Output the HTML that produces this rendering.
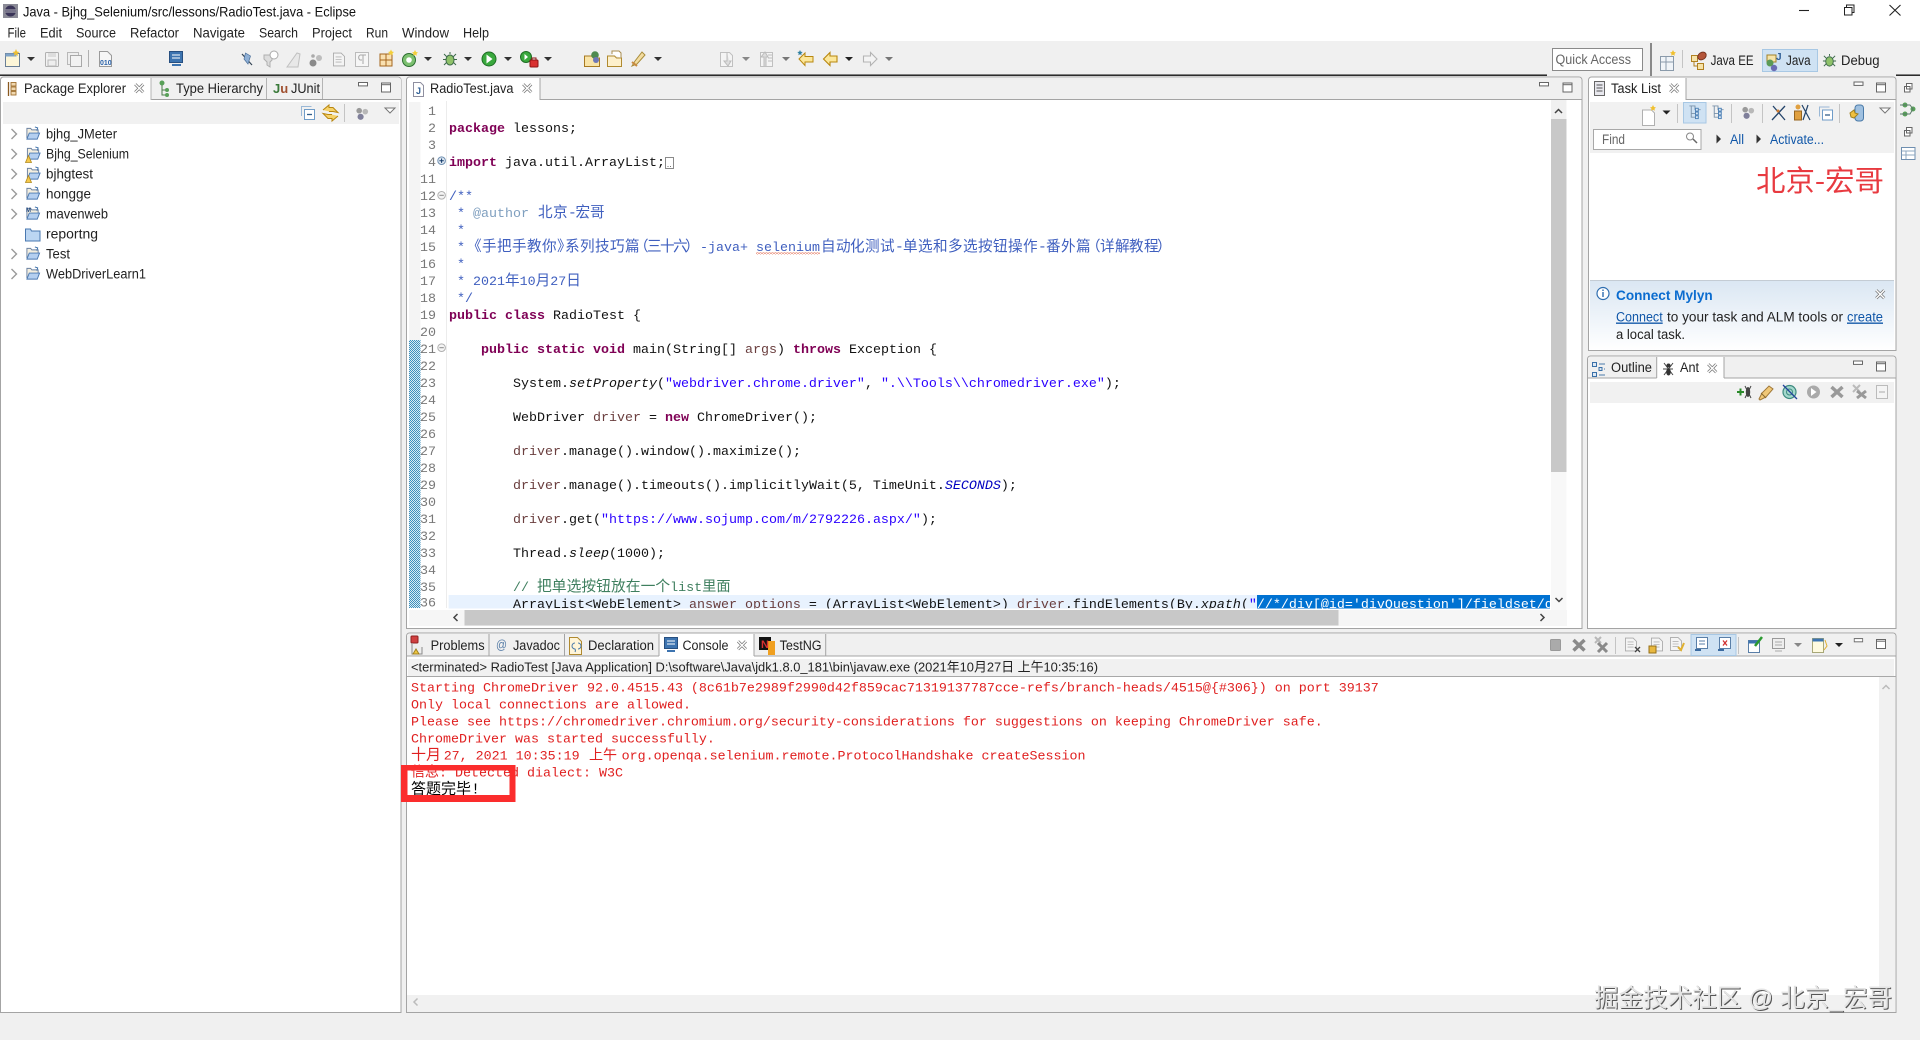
<!DOCTYPE html>
<html lang="zh"><head><meta charset="utf-8"><title>Java - Bjhg_Selenium/src/lessons/RadioTest.java - Eclipse</title>
<style>
html,body{margin:0;padding:0;width:1920px;height:1040px;overflow:hidden;background:#f0f0f0}
svg{display:block;filter:blur(.3px)}
.u{font-family:"Liberation Sans","Noto Sans CJK SC",sans-serif;font-size:13.5px;fill:#222}
.m{font-family:"Liberation Mono","Noto Sans CJK SC",monospace;font-size:13.33px;fill:#111;white-space:pre}
.n{font-family:"Liberation Mono",monospace;font-size:13.33px;fill:#787878;text-anchor:end}
.k{fill:#7f0055;font-weight:bold}.c{fill:#3f7f5f}.d{fill:#3f5fbf}.t{fill:#7f9fbf}.s{fill:#2a00ff}.l{fill:#6a3e3e}.i{font-style:italic}.f{fill:#0000c0;font-style:italic}
.z{font-size:14.6px}
.r{fill:#e02020}
.b{fill:#0f56a8}
</style></head><body>
<svg xmlns="http://www.w3.org/2000/svg" width="1920" height="1040" viewBox="0 0 1920 1040">
<defs>
<clipPath id="edclip"><rect x="447" y="100" width="1103" height="508.5"/></clipPath>
<pattern id="dith" width="2" height="2" patternUnits="userSpaceOnUse"><rect width="2" height="2" fill="#d8ecf4"/><rect width="1" height="1" fill="#3f8fbd"/><rect x="1" y="1" width="1" height="1" fill="#3f8fbd"/></pattern>
<pattern id="squig" width="3" height="2" patternUnits="userSpaceOnUse"><path d="M0 1.6L1.5 .4 3 1.6" fill="none" stroke="#e06a50" stroke-width=".7"/></pattern>
<symbol id="cx" viewBox="0 0 10 10"><path d="M1.2 1.2l7.600 7.600M8.800 1.200l-7.600 7.600" stroke="#777" stroke-width="2.800"/><path d="M1.200 1.200l7.600 7.600M8.800 1.200l-7.600 7.600" stroke="#fff" stroke-width="1.300"/></symbol>
<symbol id="mn" viewBox="0 0 10 5"><rect x=".5" y=".5" width="9" height="3.4" fill="#fff" stroke="#666"/></symbol>
<symbol id="mx" viewBox="0 0 10 10"><rect x=".5" y=".5" width="9" height="9" fill="#fff" stroke="#666"/><path d="M.5 2.2h9" stroke="#666"/></symbol>
<symbol id="fo" viewBox="0 0 16 16"><path d="M1.5 13V2.5h4l1.2 1.6h6.8V8" fill="#f4efe0" stroke="#6a80a0"/><path d="M1.5 14l2.5-6.5h11L12.5 14z" fill="#b4cff0" stroke="#4a78b0"/><path d="M10 1l3 1-1 3" fill="none" stroke="#3a6ea8"/></symbol>
<symbol id="wa" viewBox="0 0 7 8"><path d="M3.5 .5L6.5 7.5H.5z" fill="#f6c94c" stroke="#b08a20" stroke-width=".8"/></symbol>
<symbol id="bug" viewBox="0 0 16 16"><g stroke="#3d6a4a" stroke-width="1"><path d="M8 1v2M2 3l3 3M14 3l-3 3M1 8.500h3M12 8.500h3M2 14l3-3M14 14l-3-3"/></g><ellipse cx="8" cy="9" rx="4" ry="5" fill="#8fc26a" stroke="#3d6a4a"/></symbol>
<symbol id="pg" viewBox="0 0 14 16"><path d="M.5 .5h9l4 4v11H.5z" fill="#f4f4f4" stroke="#a8a8a8"/><path d="M3 5h7M3 8h7M3 11h7" stroke="#b4b4b4"/></symbol>
<symbol id="tt" viewBox="0 0 14 16"><path d="M1 1h6v4h6M3 1v12h5M3 9h5" fill="none" stroke="#7a92aa"/><rect x="7.500" y="3.500" width="3" height="3" fill="#dce8f4" stroke="#4a7fb5"/><rect x="7.500" y="7.500" width="3" height="3" fill="#dce8f4" stroke="#4a7fb5"/><rect x="7.500" y="11.500" width="3" height="3" fill="#dce8f4" stroke="#4a7fb5"/></symbol>
<symbol id="fil" viewBox="0 0 14 16"><circle cx="4" cy="5" r="3" fill="#9a9a9a"/><circle cx="10.500" cy="6" r="3" fill="#b8b8b8"/><circle cx="5.500" cy="11.500" r="3.300" fill="#7f7f9a"/></symbol>
<symbol id="col" viewBox="0 0 14 14"><rect x="3.500" y="3.500" width="10" height="10" fill="#fff" stroke="#6f9cc8"/><path d="M.5 10V.5h10" fill="none" stroke="#9ab8d6"/><path d="M6 8.500h5" stroke="#345f8a" stroke-width="1.300"/></symbol>
</defs>

<rect width="1920" height="1040" fill="#f0f0f0"/>
<rect width="1920" height="41" fill="#fff"/>

<!-- title -->
<rect x="3" y="4" width="15" height="14" fill="#8a8a96"/><circle cx="10.500" cy="11" r="5.500" fill="#3a3458"/><path d="M5 10h11M5 12h11" stroke="#ddd" stroke-width=".8"/>
<text class="u" x="23" y="16.500" textLength="333" lengthAdjust="spacingAndGlyphs" style="font-size:13.800px;fill:#111">Java - Bjhg_Selenium/src/lessons/RadioTest.java - Eclipse</text>
<path d="M1799 10.500h10" stroke="#222" stroke-width="1.100"/>
<path d="M1844.500 7.500h7.500v7.500h-7.500zM1846.500 7.500v-2.500h7.500v7.500h-2" fill="none" stroke="#222" stroke-width="1"/>
<path d="M1889.500 5l11 10.500M1900.500 5l-11 10.500" stroke="#222" stroke-width="1.100"/>

<!-- menu -->
<g style="font-size:13.500px">
<text class="u" x="7.500" y="37.500" textLength="18.500" lengthAdjust="spacingAndGlyphs">File</text>
<text class="u" x="40" y="37.500" textLength="22" lengthAdjust="spacingAndGlyphs">Edit</text>
<text class="u" x="76" y="37.500" textLength="40" lengthAdjust="spacingAndGlyphs">Source</text>
<text class="u" x="130" y="37.500" textLength="49" lengthAdjust="spacingAndGlyphs">Refactor</text>
<text class="u" x="193" y="37.500" textLength="52" lengthAdjust="spacingAndGlyphs">Navigate</text>
<text class="u" x="259" y="37.500" textLength="39" lengthAdjust="spacingAndGlyphs">Search</text>
<text class="u" x="312" y="37.500" textLength="40" lengthAdjust="spacingAndGlyphs">Project</text>
<text class="u" x="366" y="37.500" textLength="22" lengthAdjust="spacingAndGlyphs">Run</text>
<text class="u" x="402" y="37.500" textLength="47" lengthAdjust="spacingAndGlyphs">Window</text>
<text class="u" x="463" y="37.500" textLength="26" lengthAdjust="spacingAndGlyphs">Help</text>
</g>

<!-- main toolbar -->
<rect x="5.500" y="53.500" width="14" height="13" fill="#fdf6d8" stroke="#6a7f96"/><rect x="5.500" y="53.500" width="11" height="3" fill="#7fa3c8"/><path d="M16 49l1 2.500 2.500 .5-2 1.500.5 2.500-2-1.500-2 1.500.5-2.500-2-1.500 2.500-.5z" fill="#f0c030"/>
<path d="M27 57h8l-4 4z" fill="#333"/>
<rect x="45.500" y="52.500" width="13" height="14" rx="1" fill="#f2f2f2" stroke="#b0b0b0"/><rect x="48" y="60" width="8" height="6" fill="#eee" stroke="#b8b8b8"/><rect x="48" y="53" width="8" height="4" fill="#ddd"/>
<rect x="67.500" y="52.500" width="11" height="12" fill="#eee" stroke="#b8b8b8"/><rect x="70.500" y="55.500" width="11" height="11" fill="#f2f2f2" stroke="#a8a8a8"/>
<path d="M88.500 50v17" stroke="#b0b0b0"/>
<path d="M99.500 51.500h8l4 4v11h-12z" fill="#f6f6f6" stroke="#9a9a9a"/>
<text x="100" y="65" style="font:bold 7px 'Liberation Sans',sans-serif;fill:#2a62a8">010</text>
<rect x="169.500" y="51.500" width="13" height="11" fill="#3d74b0" stroke="#274f80"/><path d="M172 55h8M172 58h8" stroke="#fff"/><path d="M172 65h9" stroke="#3d74b0" stroke-width="2"/>
<path d="M242 54l10 11" stroke="#345" stroke-width="1.200"/><path d="M245.500 53l5 3-2.500 8-4-5z" fill="#8fb0d6" stroke="#4a6f9a" stroke-width=".7"/>
<path d="M264 55h8v5l-2 2v5l-3-2v-3l-3-3z" fill="#ddd" stroke="#b0b0b0"/><circle cx="274" cy="55" r="4" fill="#fff" stroke="#aaa"/>
<path d="M287 67l10-14 3 1-2 13z" fill="#e8e8e8" stroke="#c0c0c0"/>
<circle cx="313" cy="63" r="3.500" fill="#8a8a8a"/><circle cx="319" cy="58" r="3" fill="#bdbdbd"/><circle cx="313" cy="56" r="1.800" fill="#aaa"/>
<use href="#pg" x="333" y="52" width="12" height="15"/>
<rect x="355.500" y="52.500" width="13" height="14" fill="#f6f6f6" stroke="#bbb"/><path d="M360 55h6M363 55v9M360 55a3 3 0 0 0 0 5h2" fill="none" stroke="#a8a8a8"/>
<rect x="380" y="54" width="12" height="12" fill="#f9e0b0" stroke="#a5661e"/><path d="M380 60h12M386 54v12" stroke="#a5661e"/><path d="M391 49.500l1 2 2 .5-1.500 1.300.3 2-1.800-1-1.800 1 .3-2-1.500-1.300 2-.5z" fill="#f3cf3a"/>
<circle cx="409" cy="60" r="6.500" fill="#7cc070" stroke="#2c6e30"/><circle cx="409" cy="60" r="2.800" fill="#fff"/><path d="M415 50l1 2 2 .5-1.500 1.300.3 2-1.800-1-1.800 1 .3-2-1.500-1.300 2-.5z" fill="#f3cf3a"/>
<path d="M424 57h8l-4 4z" fill="#333"/>
<use href="#bug" x="442" y="51" width="16" height="16"/>
<path d="M464 57h8l-4 4z" fill="#333"/>
<circle cx="489" cy="59" r="7" fill="#3aa93e" stroke="#1f6e25"/><path d="M486.500 54.500l6 4.500-6 4.500z" fill="#fff"/>
<path d="M504 57h8l-4 4z" fill="#333"/>
<circle cx="526" cy="57" r="5.500" fill="#3aa93e" stroke="#1f6e25"/><path d="M524.500 54l3.500 3-3.500 3z" fill="#fff"/><rect x="530" y="60" width="8" height="7" rx="1" fill="#d93030" stroke="#8e1515"/><path d="M532 60v-2h4v2" fill="none" stroke="#8e1515"/>
<path d="M544 57h8l-4 4z" fill="#333"/>
<path d="M584.500 56h7l2 2h6v8.500h-15z" fill="#f9e4a8" stroke="#a87a22"/><circle cx="595" cy="55" r="3.800" fill="#4f8a4f"/><circle cx="596" cy="60" r="3" fill="#6d77b8"/>
<path d="M607.500 56h7l2 2h5v8.500h-14z" fill="#fdf0cc" stroke="#b08a30"/><path d="M612 54v-3h7l2 2v5" fill="#fff" stroke="#a88c50"/>
<path d="M632 66l3-5 7-9 3 3-8 9z" fill="#f3dca0" stroke="#a88c3a"/><path d="M632 62l5 4" stroke="#c88a40" stroke-width="2"/>
<path d="M654 57h8l-4 4z" fill="#333"/>
<path d="M720.500 52.500h9l3 3v11h-12z" fill="#f4f4f4" stroke="#c0c0c0"/><path d="M727 52v9h-3l4 5 3-5h-2" fill="#ddd" stroke="#bbb"/>
<path d="M742 57h8l-4 4z" fill="#888"/>
<path d="M760.500 52.500h12v14h-12z" fill="#f4f4f4" stroke="#c0c0c0"/><path d="M764 66v-9h-3l4-5 3 5h-2v9" fill="#ddd" stroke="#bbb"/><path d="M768 55h4M768 58h4M768 61h4" stroke="#bbb"/>
<path d="M782 57h8l-4 4z" fill="#777"/>
<path d="M799 59l6-6v3.500h8v5.500h-8v3.500z" fill="#fce79a" stroke="#b8870f"/><path d="M800 50l.8 1.700 1.900.3-1.400 1.300.3 1.900-1.600-.9-1.600.9.3-1.900-1.400-1.300 1.900-.3z" fill="#2e7fa0"/>
<path d="M823.500 59l6.500-6.500v3.500h7v6h-7v3.500z" fill="#fce79a" stroke="#b8870f" stroke-width="1.100"/>
<path d="M845 57h8l-4 4z" fill="#222"/>
<path d="M877 59l-6.500-6.500v3.500h-7v6h7v3.500z" fill="#f4f4f4" stroke="#b4b4b4" stroke-width="1.100"/>
<path d="M885 57h8l-4 4z" fill="#777"/>

<!-- quick access / perspectives -->
<rect x="1552.500" y="48.500" width="90" height="22" fill="#fff" stroke="#8a8a8a"/>
<text class="u" x="1555.500" y="64" textLength="75.500" lengthAdjust="spacingAndGlyphs" style="fill:#666">Quick Access</text>
<path d="M1651 43v33" stroke="#222"/>
<rect x="1660.500" y="56.500" width="13" height="14" fill="#f0f4f8" stroke="#8a9aaa"/><path d="M1660.500 62h13M1666 56.500v14" stroke="#8a9aaa"/><path d="M1673 50l1 2 2 .5-1.500 1.300.3 2-1.800-1-1.800 1 .3-2-1.500-1.300 2-.5z" fill="#f0c030"/>
<path d="M1682.500 50v18" stroke="#c4c4c4"/>
<rect x="1691.500" y="55.500" width="6" height="6" fill="#f6e3a8" stroke="#b08020"/><rect x="1697.500" y="63.500" width="6" height="6" fill="#f6e3a8" stroke="#b08020"/><path d="M1694 61v5h3.500" fill="none" stroke="#b08020"/><ellipse cx="1702" cy="56" rx="4.500" ry="3.500" fill="#b4553a" stroke="#7a3520" transform="rotate(-35 1702 56)"/>
<text class="u" x="1710.600" y="65" textLength="43" lengthAdjust="spacingAndGlyphs">Java EE</text>
<rect x="1762.500" y="49.500" width="55" height="22" fill="#cfe2f3" stroke="#a8c8e4"/>
<rect x="1767" y="55" width="9" height="7" fill="#f6e3a8" stroke="#a08028"/><circle cx="1770" cy="63" r="3.500" fill="#5a9a56"/><circle cx="1774" cy="68" r="3.200" fill="#6a6db4"/>
<text x="1776" y="60" style="font:bold 10px 'Liberation Sans',sans-serif;fill:#2f5f96">J</text>
<text class="u" x="1786" y="65" textLength="24.600" lengthAdjust="spacingAndGlyphs">Java</text>
<use href="#bug" x="1822" y="52" width="15" height="17"/>
<text class="u" x="1841" y="65" textLength="38.600" lengthAdjust="spacingAndGlyphs">Debug</text>

<!-- black line -->
<path d="M0 75.200H1547M1896 75.200H1920" stroke="#111" stroke-width="1.400"/>

<!-- LEFT panel -->
<path d="M.5 1012.500V80a3 3 0 0 1 3-3H398a3 3 0 0 1 3 3v932.500z" fill="#fff" stroke="#a4a4a4"/>
<path d="M151 78H399a2 2 0 0 1 2 2v19.500H151z" fill="#f0f0f0"/>
<path d="M151 99.500H401" stroke="#a0a0a0"/>
<path d="M151 78v22M266.500 78v21M322.500 78v21" stroke="#b4b4b4"/>
<rect x="3" y="102" width="396" height="22" fill="#f1f1f1"/>
<path d="M8.500 82v14" stroke="#8a5a20" stroke-width="1.300"/>
<rect x="11" y="82.500" width="5" height="3.500" fill="#f0d8b0" stroke="#a07030" stroke-width=".9"/><rect x="11" y="87" width="5" height="3.500" fill="#f0d8b0" stroke="#a07030" stroke-width=".9"/><rect x="11" y="91.500" width="5" height="3.500" fill="#f0d8b0" stroke="#a07030" stroke-width=".9"/>
<text class="u" x="24" y="93" textLength="102" lengthAdjust="spacingAndGlyphs">Package Explorer</text>
<use href="#cx" x="134" y="83" width="10.500" height="10.500"/>
<circle cx="162" cy="83" r="2.500" fill="#58a058"/><path d="M162 85v10h5M162 90h5" fill="none" stroke="#4a7a4a"/><circle cx="167" cy="90" r="2" fill="#58a058"/><circle cx="167" cy="95" r="2" fill="#58a058"/>
<text class="u" x="176" y="93" textLength="87" lengthAdjust="spacingAndGlyphs">Type Hierarchy</text>
<text x="273" y="93" style="font:bold 13px 'Liberation Sans',sans-serif"><tspan fill="#3a7a3a">J</tspan><tspan fill="#a05030">u</tspan></text>
<text class="u" x="291" y="93" textLength="29" lengthAdjust="spacingAndGlyphs">JUnit</text>
<use href="#mn" x="358" y="82" width="10" height="5"/>
<use href="#mx" x="381" y="82.500" width="10" height="10"/>
<use href="#col" x="301" y="106" width="14" height="14"/>
<path d="M323 110l6-5v2.500h4l5 5-5-1h-4M338 116l-6 5v-2.500h-4l-5-5 5 1h4" fill="#f6d26a" stroke="#b8860f" stroke-width="1"/>
<path d="M344.500 104v18" stroke="#c4c4c4"/>
<use href="#fil" x="355" y="106" width="14" height="15"/>
<path d="M385 108h10l-5 5z" fill="#fff" stroke="#777"/>

<!-- tree -->
<g fill="none" stroke="#9a9a9a" stroke-width="1.400">
<path d="M11.500 129l5 5-5 5M11.500 149l5 5-5 5M11.500 169l5 5-5 5M11.500 189l5 5-5 5M11.500 209l5 5-5 5M11.500 249l5 5-5 5M11.500 269l5 5-5 5"/>
</g>
<use href="#fo" x="25" y="126" width="16" height="15"/>
<use href="#fo" x="26" y="146" width="15" height="15"/><use href="#wa" x="25" y="155" width="7" height="8"/>
<use href="#fo" x="26" y="166" width="15" height="15"/><use href="#wa" x="25" y="175" width="7" height="8"/>
<use href="#fo" x="25" y="186" width="16" height="15"/>
<use href="#fo" x="25" y="206" width="16" height="15"/><text x="26" y="212" style="font:bold 6px 'Liberation Sans',sans-serif;fill:#244a80">M</text>
<path d="M25.500 241v-12h5l1 2h8.500v10z" fill="#bcd6f2" stroke="#4a78b0"/>
<use href="#fo" x="25" y="246" width="16" height="15"/>
<use href="#fo" x="25" y="266" width="16" height="15"/>
<text class="u" x="46" y="138.500" textLength="71" lengthAdjust="spacingAndGlyphs">bjhg_JMeter</text>
<text class="u" x="46" y="158.500" textLength="83" lengthAdjust="spacingAndGlyphs">Bjhg_Selenium</text>
<text class="u" x="46" y="178.500" textLength="47" lengthAdjust="spacingAndGlyphs">bjhgtest</text>
<text class="u" x="46" y="198.500" textLength="45" lengthAdjust="spacingAndGlyphs">hongge</text>
<text class="u" x="46" y="218.500" textLength="62" lengthAdjust="spacingAndGlyphs">mavenweb</text>
<text class="u" x="46" y="238.500" textLength="52" lengthAdjust="spacingAndGlyphs">reportng</text>
<text class="u" x="46" y="258.500" textLength="24" lengthAdjust="spacingAndGlyphs">Test</text>
<text class="u" x="46" y="278.500" textLength="100" lengthAdjust="spacingAndGlyphs">WebDriverLearn1</text>

<!-- EDITOR panel -->
<path d="M406.500 628.500V80a3 3 0 0 1 3-3H1579a3 3 0 0 1 3 3v548.500z" fill="#fff" stroke="#a4a4a4"/>
<path d="M540 78H1579a2 2 0 0 1 2 2v19.500H540z" fill="#f0f0f0"/>
<path d="M540 78v22M540 99.500H1582" stroke="#a4a4a4"/>
<path d="M413.500 82.500h7l3 3v11h-10z" fill="#fff" stroke="#8f8fa0"/><text x="416" y="94" style="font:bold 9px 'Liberation Sans',sans-serif;fill:#2f5f96">J</text>
<text class="u" x="430" y="93" textLength="83.500" lengthAdjust="spacingAndGlyphs">RadioTest.java</text>
<use href="#cx" x="522" y="83" width="10.500" height="10.500"/>
<use href="#mn" x="1539" y="82" width="10" height="5"/>
<use href="#mx" x="1562.500" y="82.500" width="10" height="10"/>

<rect x="409" y="102" width="11.500" height="506" fill="#f4f4f4"/>
<rect x="409" y="340" width="11.500" height="268" fill="url(#dith)"/>
<path d="M446.500 101v507" stroke="#ececec"/>

<g>
<text class="n" x="436" y="115">1</text><text class="n" x="436" y="132">2</text><text class="n" x="436" y="149">3</text><text class="n" x="436" y="166">4</text><text class="n" x="436" y="183">11</text><text class="n" x="436" y="200">12</text><text class="n" x="436" y="217">13</text><text class="n" x="436" y="234">14</text><text class="n" x="436" y="251">15</text><text class="n" x="436" y="268">16</text><text class="n" x="436" y="285">17</text><text class="n" x="436" y="302">18</text><text class="n" x="436" y="319">19</text><text class="n" x="436" y="336">20</text><text class="n" x="436" y="353">21</text><text class="n" x="436" y="370">22</text><text class="n" x="436" y="387">23</text><text class="n" x="436" y="404">24</text><text class="n" x="436" y="421">25</text><text class="n" x="436" y="438">26</text><text class="n" x="436" y="455">27</text><text class="n" x="436" y="472">28</text><text class="n" x="436" y="489">29</text><text class="n" x="436" y="506">30</text><text class="n" x="436" y="523">31</text><text class="n" x="436" y="540">32</text><text class="n" x="436" y="557">33</text><text class="n" x="436" y="574">34</text><text class="n" x="436" y="591">35</text><text class="n" x="436" y="606.500">36</text>
</g>
<circle cx="441.600" cy="160.700" r="3.800" fill="#dfe8f2" stroke="#6f8fb0"/><path d="M439.400 160.700h4.400M441.600 158.500v4.400" stroke="#123a6a"/>
<circle cx="441.600" cy="195.300" r="3.800" fill="#f4f4f4" stroke="#b0b0b0"/><path d="M439.400 195.300h4.400" stroke="#888"/>
<circle cx="441.600" cy="347.700" r="3.800" fill="#f4f4f4" stroke="#b0b0b0"/><path d="M439.400 347.700h4.400" stroke="#888"/>

<rect x="448.600" y="595" width="1101.400" height="13.500" fill="#e8f2fe"/>
<rect x="1257" y="595" width="293" height="13.500" fill="#0072d2"/>

<g clip-path="url(#edclip)">
<text class="m" x="449" y="132"><tspan class="k">package</tspan> lessons;</text>
<text class="m" x="449" y="166"><tspan class="k">import</tspan> java.util.ArrayList;</text>
<text class="m d" x="449" y="200">/**</text>
<text class="m d" x="449" y="217"> * <tspan class="t">@author</tspan></text>
<text class="m d z" y="217" x="538 553 568 575.500 590">北京-宏哥</text>
<text class="m d" x="449" y="234"> *</text>
<text class="m d" x="449" y="251"> *</text>
<text class="m d z" y="251" x="467 482 497 512 527 542 557 565 580 595 610 625 634 647 660 673 685">《手把手教你》系列技巧篇（三十六）</text>
<text class="m d" x="700" y="251">-java+ selenium</text>
<text class="m d z" y="251" x="821 836 850 865 880 895 903 918 933 948 963 978 993 1008 1023 1038 1046 1061 1076 1086 1100 1115 1129 1144 1157">自动化测试-单选和多选按钮操作-番外篇（详解教程）</text>
<text class="m d" x="449" y="268"> *</text>
<text class="m d" x="449" y="285"> * 2021<tspan class="z">年</tspan>10<tspan class="z">月</tspan>27<tspan class="z">日</tspan></text>
<text class="m d" x="449" y="302"> */</text>
<text class="m" x="449" y="319"><tspan class="k">public</tspan> <tspan class="k">class</tspan> RadioTest {</text>
<text class="m" x="449" y="353">    <tspan class="k">public</tspan> <tspan class="k">static</tspan> <tspan class="k">void</tspan> main(String[] <tspan class="l">args</tspan>) <tspan class="k">throws</tspan> Exception {</text>
<text class="m" x="449" y="387">        System.<tspan class="i">setProperty</tspan>(<tspan class="s">"webdriver.chrome.driver"</tspan>, <tspan class="s">".\\Tools\\chromedriver.exe"</tspan>);</text>
<text class="m" x="449" y="421">        WebDriver <tspan class="l">driver</tspan> = <tspan class="k">new</tspan> ChromeDriver();</text>
<text class="m" x="449" y="455">        <tspan class="l">driver</tspan>.manage().window().maximize();</text>
<text class="m" x="449" y="489">        <tspan class="l">driver</tspan>.manage().timeouts().implicitlyWait(5, TimeUnit.<tspan class="f">SECONDS</tspan>);</text>
<text class="m" x="449" y="523">        <tspan class="l">driver</tspan>.get(<tspan class="s">"https://www.sojump.com/m/2792226.aspx/"</tspan>);</text>
<text class="m" x="449" y="557">        Thread.<tspan class="i">sleep</tspan>(1000);</text>
<text class="m c" x="449" y="591">        // <tspan style="font-size:14.800px">把单选按钮放在一个</tspan>list<tspan style="font-size:14.200px">里面</tspan></text>
<text class="m" x="449" y="608">        ArrayList&lt;WebElement&gt; <tspan class="l">answer_options</tspan> = (ArrayList&lt;WebElement&gt;) <tspan class="l">driver</tspan>.findElements(By.<tspan class="i">xpath</tspan>(<tspan class="s">"</tspan><tspan style="fill:#fff">//*/div[@id='divQuestion']/fieldset/d</tspan></text>
</g>
<rect x="665.500" y="157.500" width="8" height="11" fill="#fff" stroke="#8a8a8a"/><path d="M667.500 166.500h1M670 166.500h1" stroke="#777"/>
<rect x="756" y="252.500" width="64" height="2" fill="url(#squig)"/>

<!-- editor scrollbars -->
<rect x="1551" y="100" width="15.500" height="510" fill="#f8f8f8"/>
<rect x="1551" y="100" width="15.500" height="19" fill="#f0f0f0"/>
<path d="M1555 113l3.500-3.500 3.500 3.500" fill="none" stroke="#444" stroke-width="1.500"/>
<rect x="1551" y="119" width="15.500" height="353" fill="#c8c8c8"/>
<path d="M1555.500 598l3.500 3.500 3.500-3.500" fill="none" stroke="#444" stroke-width="1.500"/>
<rect x="409" y="610" width="1158" height="16" fill="#f6f6f6"/>
<rect x="409" y="608.500" width="1142" height="1.500" fill="#fff"/>
<rect x="464.500" y="610" width="874" height="15.500" fill="#c8c8c8"/>
<path d="M457.500 614l-3.500 3.500 3.500 3.500" fill="none" stroke="#444" stroke-width="1.500"/>
<path d="M1540.500 614l3.500 3.500-3.500 3.500" fill="none" stroke="#444" stroke-width="1.500"/>

<!-- TASK LIST panel -->
<path d="M1588.500 350.500V80a3 3 0 0 1 3-3H1893a3 3 0 0 1 3 3v270.500z" fill="#fff" stroke="#a4a4a4"/>
<path d="M1686 78H1893a2 2 0 0 1 2 2v19.500H1686z" fill="#f0f0f0"/>
<path d="M1686 78v22M1686 99.500H1896" stroke="#a4a4a4"/>
<rect x="1594.500" y="81.500" width="10" height="14" fill="#e8e8ee" stroke="#666"/><path d="M1596.500 85h6M1596.500 88h6M1596.500 91h6" stroke="#555"/>
<text class="u" x="1611" y="93" textLength="50" lengthAdjust="spacingAndGlyphs">Task List</text>
<use href="#cx" x="1669" y="83" width="10.500" height="10.500"/>
<use href="#mn" x="1853.500" y="81.500" width="10" height="5"/>
<use href="#mx" x="1876" y="82.500" width="10" height="10"/>
<rect x="1590" y="102" width="304" height="51" fill="#f1f1f1"/>
<path d="M1642.500 110h9l3 3v12.500h-12z" fill="#fff" stroke="#b0b0b0"/><path d="M1653 105l1 2 2 .5-1.500 1.300.3 2-1.800-1-1.800 1 .3-2-1.500-1.300 2-.5z" fill="#f0c030"/>
<path d="M1662.500 110.500h8l-4 4z" fill="#222"/>
<path d="M1677.500 104v19M1731.500 104v19M1762.500 104v19M1839.500 104v19" stroke="#c4c4c4"/>
<rect x="1683.500" y="102.500" width="22.500" height="20.500" fill="#cfe2f3" stroke="#a8c8e4"/>
<use href="#tt" x="1688" y="105" width="14" height="15"/>
<use href="#tt" x="1711" y="105" width="14" height="15"/>
<use href="#fil" x="1741" y="105" width="14" height="15"/>
<path d="M1773 106l12 14M1785 106l-13 14" stroke="#24446a" stroke-width="1.300"/><circle cx="1778" cy="111" r="1.500" fill="#cc7a30"/>
<circle cx="1798" cy="107" r="2.500" fill="#e0a040"/><path d="M1794.500 120v-9h7v9z" fill="#e0a040" stroke="#966520"/><path d="M1802 105l8 15M1808 105l-5 15" stroke="#24446a" stroke-width="1.200"/>
<use href="#col" x="1819" y="106" width="14" height="15"/>
<rect x="1855" y="105" width="8.500" height="16" rx="3" fill="#9fc0e0" stroke="#4a7aa8"/><path d="M1850 113l4-3 1 3 3 1-4 4-3-1z" fill="#f0c040" stroke="#a08020"/>
<path d="M1880 108h10l-5 5z" fill="#fff" stroke="#777"/>
<rect x="1593.500" y="129.500" width="107.500" height="20" fill="#fff" stroke="#a8a8a8"/>
<text class="u" x="1602" y="144" textLength="23" lengthAdjust="spacingAndGlyphs" style="fill:#666">Find</text>
<circle cx="1690" cy="136.500" r="3.500" fill="#fff" stroke="#888"/><path d="M1693 139l4 4" stroke="#666" stroke-width="1.500"/>
<path d="M1716.500 134.500l4.500 4.500-4.500 4.500zM1756.500 134.500l4.500 4.500-4.500 4.500z" fill="#333"/>
<text class="u b" x="1730" y="144" textLength="14" lengthAdjust="spacingAndGlyphs">All</text>
<text class="u b" x="1770" y="144" textLength="54" lengthAdjust="spacingAndGlyphs">Activate...</text>
<text x="1756" y="191" textLength="128" lengthAdjust="spacingAndGlyphs" style="font-family:'Noto Sans CJK SC',sans-serif;font-size:29px;fill:#e83a40">北京-宏哥</text>

<linearGradient id="myl" x1="0" y1="0" x2="0" y2="1"><stop offset="0" stop-color="#dbe7f3"/><stop offset="1" stop-color="#fff"/></linearGradient>
<rect x="1590" y="281" width="304" height="69" fill="url(#myl)"/>
<path d="M1590 280.500h304" stroke="#c4ccd4"/>
<circle cx="1603" cy="293.500" r="6" fill="#fff" stroke="#2d6db0" stroke-width="1.200"/><path d="M1603 292v5M1603 289.500v1.500" stroke="#2d6db0" stroke-width="1.400"/>
<text x="1616" y="300" textLength="96.700" lengthAdjust="spacingAndGlyphs" style="font:bold 13.500px 'Liberation Sans',sans-serif;fill:#0b6ccf">Connect Mylyn</text>
<use href="#cx" x="1875" y="289" width="10.500" height="10.500"/>
<text class="u b" x="1616" y="321.500" textLength="46.700" lengthAdjust="spacingAndGlyphs" text-decoration="underline">Connect</text>
<text class="u" x="1667" y="321.500" textLength="176" lengthAdjust="spacingAndGlyphs">to your task and ALM tools or</text>
<text class="u b" x="1847" y="321.500" textLength="36" lengthAdjust="spacingAndGlyphs" text-decoration="underline">create</text>
<text class="u" x="1616" y="339" textLength="69" lengthAdjust="spacingAndGlyphs">a local task.</text>

<!-- OUTLINE / ANT panel -->
<path d="M1587.500 628.500V359a3 3 0 0 1 3-3H1893a3 3 0 0 1 3 3v269.500z" fill="#fff" stroke="#a4a4a4"/>
<path d="M1588 359a2 2 0 0 1 2-2h66.700v21H1588z" fill="#f0f0f0"/>
<path d="M1724 357H1893a2 2 0 0 1 2 2v19H1724z" fill="#f0f0f0"/>
<path d="M1588 378h68.700M1656.700 357v21M1724 357v21M1724 378h172" stroke="#a4a4a4"/>
<rect x="1592.500" y="362.500" width="4" height="4" fill="#dce8f4" stroke="#3a70a8"/><rect x="1592.500" y="372.500" width="4" height="4" fill="#dce8f4" stroke="#3a70a8"/><rect x="1599" y="367.500" width="3" height="3" fill="#dce8f4" stroke="#3a70a8"/><path d="M1599 364h6M1604 369h1M1599 375h6" stroke="#4a7aaa"/>
<text class="u" x="1611" y="372" textLength="41" lengthAdjust="spacingAndGlyphs">Outline</text>
<path d="M1664 363l9 12M1673 363l-9 12M1663 369h10" stroke="#444"/><ellipse cx="1668.500" cy="365.500" rx="2" ry="2" fill="#333"/><ellipse cx="1668.500" cy="372" rx="2.300" ry="3.500" fill="#333"/>
<text class="u" x="1680" y="372" textLength="19" lengthAdjust="spacingAndGlyphs">Ant</text>
<use href="#cx" x="1707" y="363" width="10.500" height="10.500"/>
<use href="#mn" x="1853" y="360.500" width="10" height="5"/>
<use href="#mx" x="1876" y="361.500" width="10" height="10"/>
<rect x="1590" y="382" width="304" height="21" fill="#f1f1f1"/>
<path d="M1737 392h7M1740.500 388.500v7" stroke="#2a8a2a" stroke-width="2"/><path d="M1745 386l6 12M1751 386l-6 12" stroke="#444"/><ellipse cx="1748" cy="392" rx="2.200" ry="5" fill="#444"/>
<path d="M1759 399l3-6 7-7 4 3-7 8-6 3z" fill="#f0c878" stroke="#a07838"/><path d="M1761 393l5 5" stroke="#8a6a30"/>
<circle cx="1789.500" cy="392" r="6.500" fill="#a4d8cc" stroke="#3e8a80" stroke-width="1.200"/><circle cx="1789.500" cy="392" r="3" fill="none" stroke="#3e8a80"/><path d="M1783 385l14 14" stroke="#24449a" stroke-width="1.300"/>
<circle cx="1813.500" cy="392" r="6.500" fill="#aaa"/><path d="M1811 388l5.500 4-5.500 4z" fill="#fff"/>
<path d="M1831.500 387l11 10M1842.500 387l-11 10" stroke="#999" stroke-width="3.500"/>
<path d="M1853 385l7 7M1860 385l-7 7" stroke="#bbb" stroke-width="2"/><path d="M1857 391l9 7M1866 391l-9 7" stroke="#999" stroke-width="3"/>
<rect x="1876.500" y="385.500" width="11" height="13" fill="#f4f4f4" stroke="#bbb"/><path d="M1879 392h6" stroke="#aaa"/>

<!-- trim strip -->
<path d="M1906.500 83.500h5.500v5.500h-5.500zM1904.500 86.500h5.500v5.500h-5.500z" fill="#fff" stroke="#666"/>
<circle cx="1905" cy="105" r="2.500" fill="#58a058"/><circle cx="1913" cy="109" r="2.500" fill="#58a058"/><circle cx="1905" cy="114" r="2.500" fill="#58a058"/><path d="M1900 105h10l3 4M1900 114h10l3-5" fill="none" stroke="#5a7a6a"/>
<path d="M1906.500 127.500h5.500v5.500h-5.500zM1904.500 130.500h5.500v5.500h-5.500z" fill="#fff" stroke="#666"/>
<rect x="1901.500" y="147.500" width="13.500" height="12" fill="#fff" stroke="#6f8fb0"/><path d="M1901.500 151h13.500M1901.500 155h13.500M1906 151v8" stroke="#8fa8c0"/>

<!-- BOTTOM panel -->
<path d="M406.500 1012.500V636a3 3 0 0 1 3-3H1893a3 3 0 0 1 3 3v376.500z" fill="#fff" stroke="#a4a4a4"/>
<path d="M407 636a2 2 0 0 1 2-2H659v22H407z" fill="#f0f0f0"/>
<path d="M754 634H1893a2 2 0 0 1 2 2v20H754z" fill="#f0f0f0"/>
<path d="M407 656h252M754 656h1142M489 634v22M564.500 634v22M659 634v22M754 634v22M825.700 634v22" stroke="#a4a4a4"/>
<rect x="411" y="636" width="7" height="7" rx="1" fill="#d04040" stroke="#902020"/><path d="M412 643v11h10V647" fill="#eee" stroke="#8a8a8a"/><path d="M413 654l3-5 3 5z" fill="#f0c840" stroke="#a08020"/>
<text class="u" x="430.600" y="650" textLength="54" lengthAdjust="spacingAndGlyphs">Problems</text>
<text x="496" y="649" textLength="11" lengthAdjust="spacingAndGlyphs" style="font:13px 'Liberation Sans',sans-serif;fill:#5a7fa8">@</text>
<text class="u" x="513" y="650" textLength="47" lengthAdjust="spacingAndGlyphs">Javadoc</text>
<path d="M569.500 637.500h8l4 4v13h-12z" fill="#fff5d8" stroke="#b08a30"/><path d="M575 643a3 3 0 0 0 0 6a3 3 0 0 1 0 3M578 643a3 3 0 0 1 0 6" fill="none" stroke="#4a7aaa"/>
<text class="u" x="588" y="650" textLength="66" lengthAdjust="spacingAndGlyphs">Declaration</text>
<rect x="664.500" y="637.500" width="13" height="11" fill="#3d74b0" stroke="#274f80"/><path d="M667 641h8M667 644h8" stroke="#fff"/><path d="M667 651h8" stroke="#3d74b0" stroke-width="2"/>
<text class="u" x="682.500" y="650" textLength="46" lengthAdjust="spacingAndGlyphs">Console</text>
<use href="#cx" x="736.700" y="640" width="10.500" height="10.500"/>
<rect x="759" y="637" width="12" height="13" fill="#111"/><rect x="768" y="641" width="7" height="14" fill="#f0a020"/>
<text x="761" y="648" style="font:bold 11px 'Liberation Sans',sans-serif;fill:#d83030">N</text>
<text class="u" x="779.600" y="650" textLength="42" lengthAdjust="spacingAndGlyphs">TestNG</text>

<!-- bottom toolbar -->
<rect x="1550.500" y="639.500" width="10" height="11" rx="1" fill="#aaa" stroke="#999"/>
<path d="M1573.500 640l11 10.500M1584.500 640l-11 10.500" stroke="#8a8a8a" stroke-width="3.500"/>
<path d="M1595 637l6 6M1601 637l-6 6" stroke="#b8b8b8" stroke-width="2"/><path d="M1598 643l9 9M1607 643l-9 9" stroke="#8a8a8a" stroke-width="3"/>
<path d="M1615.500 637v17" stroke="#c4c4c4"/>
<use href="#pg" x="1625" y="637" width="12" height="15"/><path d="M1635 647l5 5M1640 647l-5 5" stroke="#444" stroke-width="1.300"/>
<use href="#pg" x="1651" y="637" width="12" height="15"/><rect x="1649" y="646" width="7" height="7" fill="#e8b840" stroke="#96701a"/>
<use href="#pg" x="1670" y="637" width="12" height="14"/><path d="M1678 647l3 3 3-7" fill="none" stroke="#e0b030" stroke-width="2"/>
<rect x="1691" y="634.500" width="45" height="21" fill="#cfe2f3" stroke="#a8c8e4"/>
<rect x="1696.500" y="637.500" width="11" height="11" fill="#fff" stroke="#5a7fa8"/><path d="M1699 641h6M1699 644h6" stroke="#5a7fa8"/><path d="M1695 650h6" stroke="#3a6aa0" stroke-width="2"/>
<rect x="1719.500" y="637.500" width="11" height="11" fill="#fff" stroke="#5a7fa8"/><path d="M1723 640.500l4 5M1727 640.500l-4 5" stroke="#d03030" stroke-width="1.300"/><path d="M1718 650h6" stroke="#3a6aa0" stroke-width="2"/>
<path d="M1738.500 637v17" stroke="#c4c4c4"/>
<rect x="1748.500" y="640.500" width="11" height="12" fill="#fff" stroke="#5a7fa8"/><rect x="1748.500" y="640.500" width="11" height="3" fill="#3d74b0"/><path d="M1755 646l7-9" stroke="#2a9a30" stroke-width="2.500"/>
<rect x="1772.500" y="638.500" width="12" height="10" fill="#eee" stroke="#999"/><path d="M1775 642h7M1775 645h7M1775 651h7" stroke="#aaa"/>
<path d="M1794 643h8l-4 4z" fill="#888"/>
<rect x="1812.500" y="638.500" width="11" height="14" fill="#fffbe0" stroke="#a8a878"/><rect x="1812.500" y="638.500" width="11" height="3" fill="#3d74b0"/><path d="M1825 640l2 6-3 4" stroke="#e0b030" fill="none"/>
<path d="M1835 643h8l-4 4z" fill="#222"/>
<use href="#mn" x="1853.700" y="638" width="9.500" height="5"/>
<use href="#mx" x="1876" y="639" width="10" height="10"/>

<!-- console -->
<rect x="408" y="659" width="1486" height="17" fill="#f1f1f1"/>
<path d="M407 676.500h1489" stroke="#a8a8a8"/>
<text class="u" x="411" y="671.500" textLength="687" lengthAdjust="spacingAndGlyphs" style="font-size:13px">&lt;terminated&gt; RadioTest [Java Application] D:\software\Java\jdk1.8.0_181\bin\javaw.exe (2021年10月27日 上午10:35:16)</text>
<g>
<text class="m r" x="411" y="691.500">Starting ChromeDriver 92.0.4515.43 (8c61b7e2989f2990d42f859cac71319137787cce-refs/branch-heads/4515@{#306}) on port 39137</text>
<text class="m r" x="411" y="708.500">Only local connections are allowed.</text>
<text class="m r" x="411" y="725.500">Please see https://chromedriver.chromium.org/security-considerations for suggestions on keeping ChromeDriver safe.</text>
<text class="m r" x="411" y="742.500">ChromeDriver was started successfully.</text>
<text class="m r" x="411" y="759.500"><tspan style="font-size:15px">十月</tspan></text>
<text class="m r" x="443.700" y="759.500">27, 2021 10:35:19</text>
<text class="m r" x="589" y="759.500" style="font-size:14px">上午</text>
<text class="m r" x="621.600" y="759.500">org.openqa.selenium.remote.ProtocolHandshake createSession</text>
<text class="m r" x="411" y="776.500"><tspan style="font-size:14px">信息</tspan>: Detected dialect: W3C</text>
<text class="m" x="411" y="793.500" style="fill:#000;font-size:15px">答题完毕!</text>
</g>
<path fill-rule="evenodd" d="M401 765h114.500v37H401zM407.500 770.500V795h102V770.500z" fill="#fb2d2d"/>
<rect x="1879" y="677" width="16" height="335" fill="#f1f1f1"/>
<path d="M1882.500 689l3.500-3.500 3.500 3.500" fill="none" stroke="#bbb" stroke-width="1.500"/>
<rect x="407" y="995" width="1472" height="17" fill="#f1f1f1"/>
<path d="M417.500 998.500l-3.500 3.500 3.500 3.500" fill="none" stroke="#bbb" stroke-width="1.500"/>

<!-- watermark -->
<text x="1595" y="1007.500" textLength="298" lengthAdjust="spacingAndGlyphs" style="font-family:'Liberation Sans','Noto Sans CJK SC',sans-serif;font-size:25px;fill:#555">掘金技术社区 @ 北京_宏哥</text>
<text x="1594" y="1006.500" textLength="298" lengthAdjust="spacingAndGlyphs" style="font-family:'Liberation Sans','Noto Sans CJK SC',sans-serif;font-size:25px;fill:#e4e4e4">掘金技术社区 @ 北京_宏哥</text>
</svg>
</body></html>
